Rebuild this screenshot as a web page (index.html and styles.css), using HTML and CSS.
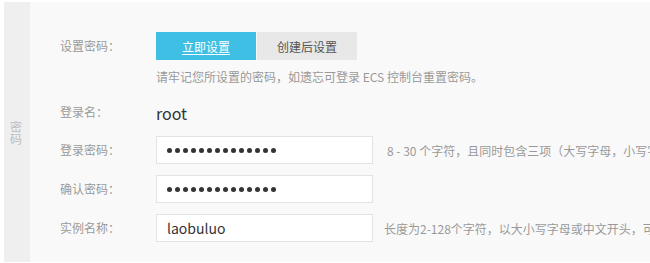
FILE: index.html
```html
<!DOCTYPE html>
<html lang="zh-CN">
<head>
<meta charset="utf-8">
<title>设置密码</title>
<link rel="stylesheet" href="styles.css">
</head>
<body>
<div class="page">
  <div class="panel">
    <div class="side"><span class="side-label">密码</span></div>
    <div class="main">
      <div class="row row-btns">
        <div class="label">设置密码：</div>
        <div class="btn-group">
          <span class="btn btn-primary">立即设置</span>
          <span class="btn btn-default">创建后设置</span>
        </div>
      </div>
      <div class="row-hint">请牢记您所设置的密码，如遗忘可登录 ECS 控制台重置密码。</div>
      <div class="row row-user">
        <div class="label">登录名：</div>
        <div class="value">root</div>
      </div>
      <div class="row row-field">
        <div class="label">登录密码：</div>
        <div class="input"><span class="dots"><i></i><i></i><i></i><i></i><i></i><i></i><i></i><i></i><i></i><i></i><i></i><i></i><i></i><i></i></span></div>
        <div class="tip tip-pw">8 - 30 个字符，且同时包含三项（大写字母，小写字母，数字和特殊符号）</div>
      </div>
      <div class="row row-field">
        <div class="label">确认密码：</div>
        <div class="input"><span class="dots"><i></i><i></i><i></i><i></i><i></i><i></i><i></i><i></i><i></i><i></i><i></i><i></i><i></i><i></i></span></div>
      </div>
      <div class="row row-field">
        <div class="label">实例名称：</div>
        <div class="input"><span class="text">laobuluo</span></div>
        <div class="tip">长度为2-128个字符，以大小写字母或中文开头，可包含数字</div>
      </div>
    </div>
  </div>
</div>
</body>
</html>
```

FILE: styles.css
```css
html, body {
  margin: 0;
  padding: 0;
  background: #ffffff;
  overflow: hidden;
}

body {
  font-family: "Noto Sans CJK SC", "Noto Sans", sans-serif;
  font-size: 12px;
  color: #333;
}

.page {
  padding: 2px 0 0 4px;
}

.panel {
  display: flex;
  height: 260px;
}

.side {
  width: 26px;
  background: #efefef;
  display: flex;
  align-items: center;
  justify-content: center;
  flex-shrink: 0;
}

.side-label {
  writing-mode: vertical-rl;
  font-size: 12px;
  line-height: 12px;
  color: #bdbdbd;
  margin-right: 3px;
  margin-top: 2px;
}

.main {
  flex: 1;
  background: #f9f9f9;
  padding: 30px 0 0 30px;
  white-space: nowrap;
  overflow: hidden;
}

.row {
  display: flex;
  align-items: center;
  height: 28px;
}

.label {
  width: 96px;
  flex-shrink: 0;
  color: #999;
  font-size: 12px;
  line-height: 16px;
}

.btn-group {
  display: flex;
  gap: 1px;
}

.btn {
  display: flex;
  align-items: center;
  justify-content: center;
  width: 100px;
  height: 28px;
  font-size: 12px;
}

.btn-primary {
  background: #40bfe4;
  color: #fff;
  text-decoration: underline;
  text-underline-offset: 2px;
}

.btn-default {
  background: #e8e8e8;
  color: #555;
}

.row-hint {
  margin: 7px 0 0 96px;
  line-height: 20px;
  color: #999;
}

.row-user {
  margin-top: 11px;
}

.value {
  font-size: 16px;
  color: #333;
  margin-top: 1px;
}

.row-field {
  margin-top: 11px;
}

.row-user + .row-field {
  margin-top: 10px;
}

.input {
  box-sizing: border-box;
  width: 217px;
  height: 28px;
  background: #fff;
  border: 1px solid #e3e3e3;
  padding-left: 10px;
  display: flex;
  align-items: center;
  flex-shrink: 0;
}

.dots {
  display: flex;
  gap: 3px;
  margin-top: 1px;
}

.dots i {
  width: 5px;
  height: 5px;
  border-radius: 50%;
  background: #333;
}

.text {
  font-size: 14px;
  color: #333;
}

.tip {
  margin-left: 11px;
  color: #999;
  font-size: 12px;
}

.tip-pw {
  margin-left: 14px;
}
```
